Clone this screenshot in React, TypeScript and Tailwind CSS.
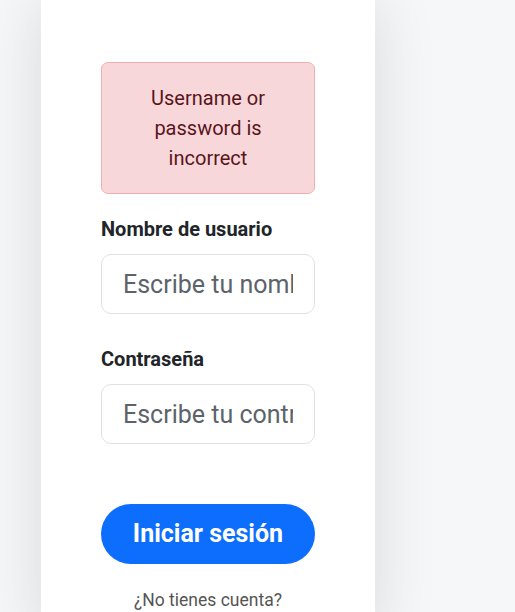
export default function App() {
  return (
    <main className="min-h-screen bg-[#f6f7f9] overflow-hidden" style={{ fontFamily: "Roboto, 'Liberation Sans', sans-serif" }}>
      <div className="ml-[41px] w-[334px] min-h-[640px] bg-white px-[60px] pt-[62px] shadow-[0_0_60px_rgba(0,0,0,0.12)]">
        {/* ALERT */}
        <div className="rounded-[7px] border border-[#f1aeb5] bg-[#f8d7da] p-[20px] text-center text-[20px] leading-[30px] text-[#58151c]">
          Username or password is incorrect
        </div>

        {/* FORM */}
        <form className="flex flex-col" onSubmit={(e) => e.preventDefault()}>
          <label className="mt-[20px] mb-[10px] text-[20px] leading-[30px] font-bold text-[#212529]">
            Nombre de usuario
          </label>
          <input
            type="text"
            placeholder="Escribe tu nombre de usuario"
            className="h-[60px] w-full rounded-[10px] border border-[#dee2e6] bg-white px-[21px] text-[25px] text-[#212529] placeholder:text-[#5c636a] outline-none"
          />

          <label className="mt-[30px] mb-[10px] text-[20px] leading-[30px] font-bold text-[#212529]">
            Contraseña
          </label>
          <input
            type="password"
            placeholder="Escribe tu contraseña"
            className="h-[60px] w-full rounded-[10px] border border-[#dee2e6] bg-white px-[21px] text-[25px] text-[#212529] placeholder:text-[#5c636a] outline-none"
          />

          <button
            type="submit"
            className="mt-[60px] h-[60px] w-full rounded-full bg-[#0d6efd] text-[25px] font-bold text-white"
          >
            Iniciar sesión
          </button>
        </form>

        <p className="mt-[23px] text-center text-[17.5px] leading-[26px] text-[#555]">¿No tienes cuenta?</p>
      </div>
    </main>
  );
}
